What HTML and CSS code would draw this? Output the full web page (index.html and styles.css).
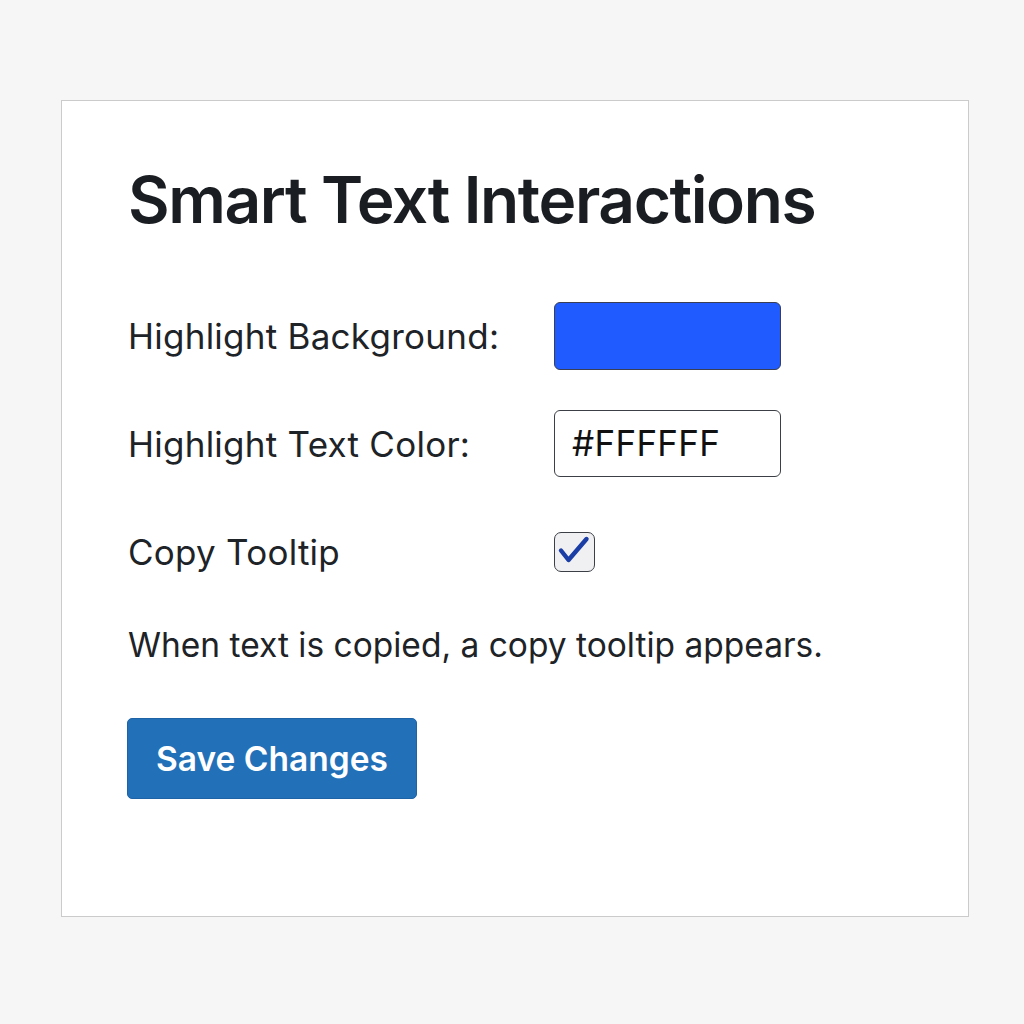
FILE: index.html
```html
<!DOCTYPE html>
<html>
<head>
<meta charset="utf-8">
<link rel="stylesheet" href="styles.css">
</head>
<body>
<div class="card">
  <h1 class="title">Smart Text Interactions</h1>
  <div class="row row-bg">
    <label class="label">Highlight Background:</label>
    <div class="swatch"></div>
  </div>
  <div class="row row-text">
    <label class="label">Highlight Text Color:</label>
    <div class="text-input">#FFFFFF</div>
  </div>
  <div class="row row-check">
    <label class="label">Copy Tooltip</label>
    <div class="checkbox">
      <svg width="38" height="37" viewBox="0 0 38 37"><path d="M6 17.5 L13.5 27 L31.5 6" fill="none" stroke="#1a3ea6" stroke-width="4.4" stroke-linecap="round" stroke-linejoin="round"/></svg>
    </div>
  </div>
  <p class="desc">When text is copied, a copy tooltip appears.</p>
  <button class="btn">Save Changes</button>
</div>
</body>
</html>
```
FILE: styles.css
```css
html, body { margin: 0; padding: 0; }
body {
  background: #f6f6f6;
  font-family: Inter, "Noto Sans", sans-serif;
  color: #1d2327;
  padding: 100px 0 0 61px;
}
.card {
  width: 908px;
  height: 817px;
  background: #fff;
  border: 1px solid #cbcbcb;
  box-sizing: border-box;
  padding: 0 0 0 66px;
}
.title {
  margin: 61px 0 0 0;
  font-size: 64px;
  font-weight: 600;
  line-height: 76px;
  letter-spacing: -1.4px;
  color: #1a1d21;
}
.row {
  display: flex;
  align-items: center;
}
.row-bg { margin-top: 64px; }
.row-text { margin-top: 40px; }
.row-check { margin-top: 55px; height: 40px; }
.label {
  width: 426px;
  flex: none;
  font-size: 35px;
  letter-spacing: 0.25px;
  line-height: 40px;
  color: #1d2327;
}
.swatch {
  width: 227px;
  height: 68px;
  box-sizing: border-box;
  background: #1f5bff;
  border: 1px solid #3a3f55;
  border-radius: 6px;
}
.text-input {
  width: 227px;
  height: 67px;
  box-sizing: border-box;
  border: 1.5px solid #3c4046;
  border-radius: 6px;
  font-size: 35px;
  letter-spacing: 0.3px;
  line-height: 64px;
  padding-left: 17px;
  color: #111;
}
.checkbox {
  width: 41px;
  height: 40px;
  box-sizing: border-box;
  border: 1.5px solid #3c4046;
  border-radius: 7px;
  background: #f0f0f3;
  display: flex;
}
.desc {
  margin: 53px 0 0 0;
  font-size: 33.5px;
  line-height: 40px;
  color: #1d2327;
}
.btn {
  display: block;
  margin: 53px 0 0 -1px;
  width: 290px;
  height: 81px;
  background: #2271b8;
  border: 1px solid #1d63a6;
  border-radius: 5px;
  color: #fff;
  font-family: Inter, "Noto Sans", sans-serif;
  font-size: 33.5px;
  font-weight: 600;
  padding: 0;
}
```
